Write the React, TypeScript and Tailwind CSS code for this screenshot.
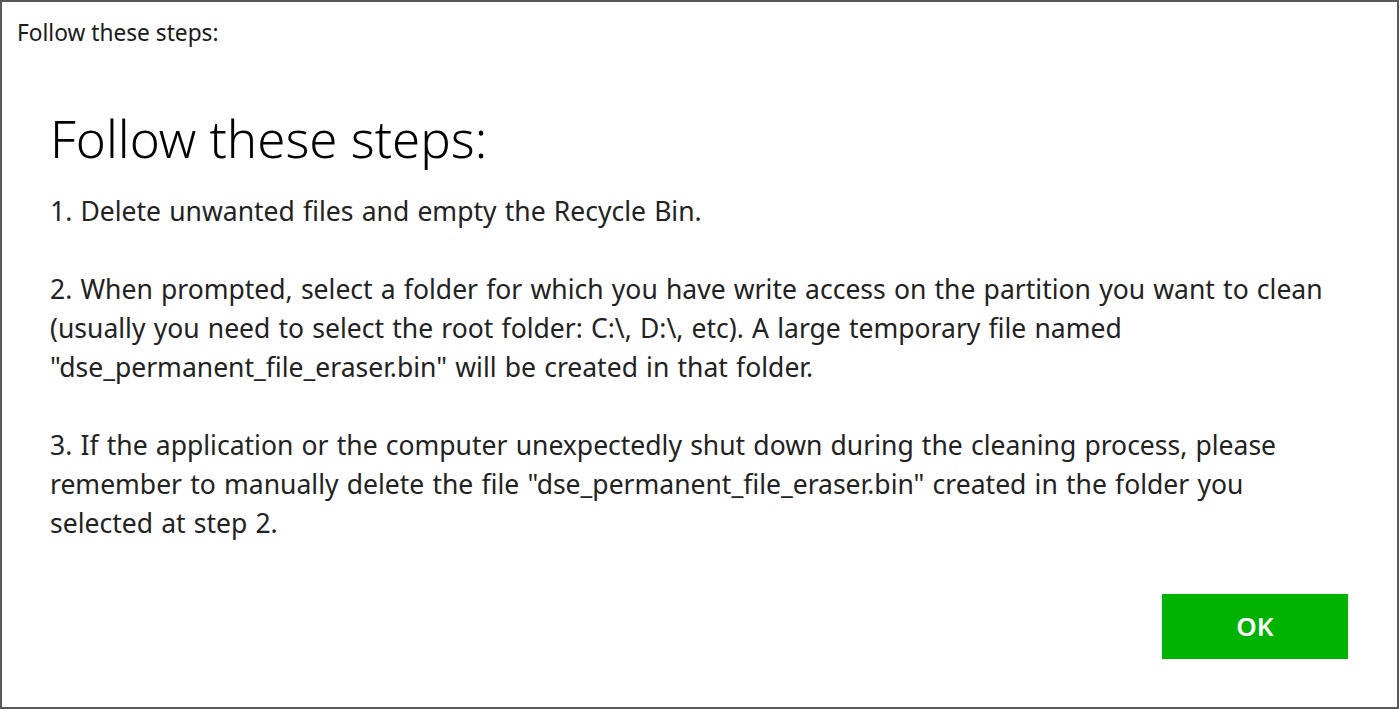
import React from "react";

const App = () => {
  return (
    <div
      className="w-[1399px] h-[709px] bg-white border-2 border-[#5a5a5a] flex flex-col text-[#1a1a1a]"
      style={{ fontFamily: '"Noto Sans", "Open Sans", sans-serif' }}
    >
      <div className="px-[15px] pt-[16px] text-[22.7px] leading-[30px] text-[#1a1a1a]">Follow these steps:</div>

      <div className="pl-[48px] pr-[20px] pt-[60px]">
        <h1 className="text-[51px] leading-[60px] font-light text-black">Follow these steps:</h1>
        <div className="mt-[24px] text-[26.5px] leading-[39px] text-[#222] [word-spacing:1.3px]">
          <p>1. Delete unwanted files and empty the Recycle Bin.</p>
          <p className="mt-[39px]">
            2. When prompted, select a folder for which you have write access on the partition you want to clean
            <br />
            (usually you need to select the root folder: C:\, D:\, etc). A large temporary file named
            <br />
            "dse_permanent_file_eraser.bin" will be created in that folder.
          </p>
          <p className="mt-[39px]">
            3. If the application or the computer unexpectedly shut down during the cleaning process, please
            <br />
            remember to manually delete the file "dse_permanent_file_eraser.bin" created in the folder you
            <br />
            selected at step 2.
          </p>
        </div>
      </div>

      <div className="flex justify-end pr-[49px] mt-auto pb-[48px]">
        <button className="w-[186px] h-[65px] bg-[#00b300] text-white text-[26px] font-semibold">OK</button>
      </div>
    </div>
  );
};

export default App;
